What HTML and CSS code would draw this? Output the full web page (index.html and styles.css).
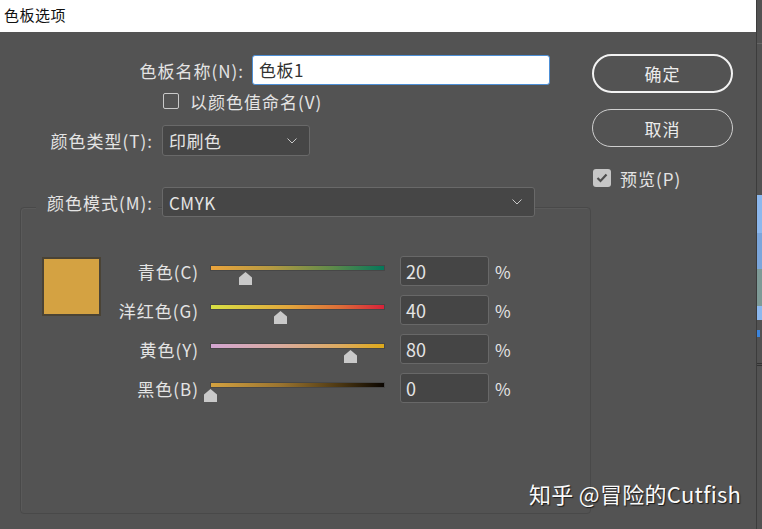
FILE: index.html
```html
<!DOCTYPE html>
<html lang="zh-CN">
<head>
  <meta charset="UTF-8">
  <title>色板选项</title>
  <link rel="stylesheet" href="styles.css">
</head>
<body>
  <div class="screen">
    <div class="window">
      <div class="titlebar">色板选项</div>
      <div class="dialog">
        <div class="form">
          <div class="row name-row">
            <label class="lbl lbl-name">色板名称(N):</label>
            <div class="text-input">色板1</div>
          </div>
          <div class="row check-row">
            <span class="box"></span>
            <span class="check-text">以颜色值命名(V)</span>
          </div>
          <div class="row type-row">
            <label class="lbl lbl-type">颜色类型(T):</label>
            <div class="select select-type">
              <span>印刷色</span>
              <svg class="chev" width="10" height="6" viewBox="0 0 10 6"><polyline points="0.5,0.5 5,5 9.5,0.5" fill="none" stroke="#c9c9c9" stroke-width="1"/></svg>
            </div>
          </div>

          <div class="group">
            <div class="group-head">
              <label class="lbl lbl-mode">颜色模式(M):</label>
              <div class="select select-mode">
                <span>CMYK</span>
                <svg class="chev" width="10" height="6" viewBox="0 0 10 6"><polyline points="0.5,0.5 5,5 9.5,0.5" fill="none" stroke="#c9c9c9" stroke-width="1"/></svg>
              </div>
            </div>
            <div class="group-body">
              <div class="swatch"></div>
              <div class="sliders">
                <div class="slider-row">
                  <label class="lbl lbl-ink">青色(C)</label>
                  <div class="slider">
                    <div class="track track-c"></div>
                    <div class="thumb" style="left: 20%"></div>
                  </div>
                  <div class="num">20</div>
                  <span class="pct">%</span>
                </div>
                <div class="slider-row">
                  <label class="lbl lbl-ink">洋红色(G)</label>
                  <div class="slider">
                    <div class="track track-m"></div>
                    <div class="thumb" style="left: 40%"></div>
                  </div>
                  <div class="num">40</div>
                  <span class="pct">%</span>
                </div>
                <div class="slider-row">
                  <label class="lbl lbl-ink">黄色(Y)</label>
                  <div class="slider">
                    <div class="track track-y"></div>
                    <div class="thumb" style="left: 80%"></div>
                  </div>
                  <div class="num">80</div>
                  <span class="pct">%</span>
                </div>
                <div class="slider-row">
                  <label class="lbl lbl-ink">黑色(B)</label>
                  <div class="slider">
                    <div class="track track-k"></div>
                    <div class="thumb" style="left: 0%"></div>
                  </div>
                  <div class="num">0</div>
                  <span class="pct">%</span>
                </div>
              </div>
            </div>
          </div>
        </div>

        <div class="side">
          <button class="btn btn-ok">确定</button>
          <button class="btn btn-cancel">取消</button>
          <div class="preview">
            <span class="box box-on">
              <svg width="12" height="10" viewBox="0 0 12 10"><polyline points="1.5,5 4.5,8 10.5,1.5" fill="none" stroke="#4e4e4e" stroke-width="2.2"/></svg>
            </span>
            <span class="check-text">预览(P)</span>
          </div>
        </div>

        <div class="watermark">知乎 @冒险的Cutfish</div>
      </div>
    </div>

    <div class="backdrop">
      <div class="bd-line"></div>
      <div class="bd-blue"></div>
      <div class="bd-blue2"></div>
      <div class="bd-teal"></div>
      <div class="bd-blue"></div>
      <div class="bd-dot"></div>
      <div class="bd-sep"></div>
    </div>
  </div>
</body>
</html>
```

FILE: styles.css
```css
* {
  box-sizing: border-box;
}
body {
  margin: 0;
  font-family: "Noto Sans CJK SC", "Noto Sans", sans-serif;
  background: #505050;
  color: #e4e4e4;
}
.screen {
  display: flex;
  width: 762px;
  height: 529px;
  overflow: hidden;
}
.window {
  width: 756px;
  flex: none;
  display: flex;
  flex-direction: column;
}
.titlebar {
  height: 32px;
  background: #fff;
  color: #111;
  font-size: 15px;
  line-height: 30px;
  padding-left: 4px;
  letter-spacing: 0.5px;
}
.dialog {
  flex: 1;
  background: #535353;
  display: flex;
  position: relative;
}
.form {
  width: 590px;
}
.row {
  display: flex;
  align-items: center;
}
.lbl {
  font-size: 17px;
  letter-spacing: 1px;
  text-align: right;
  white-space: nowrap;
}
.name-row {
  margin-top: 23px;
  height: 30px;
}
.lbl-name {
  width: 244px;
}
.text-input {
  margin-left: 8px;
  width: 298px;
  height: 30px;
  background: #fff;
  border: 1px solid #4d8fd6;
  border-radius: 3px;
  color: #333;
  font-size: 17px;
  letter-spacing: 0.5px;
  line-height: 27px;
  padding-left: 6px;
}
.check-row {
  margin-top: 6px;
  height: 20px;
  padding-left: 163px;
}
.box {
  width: 16px;
  height: 16px;
  border: 1px solid #c9c9c9;
  border-radius: 2px;
  flex: none;
}
.check-text {
  font-size: 17px;
  letter-spacing: 1px;
  line-height: 1;
  margin-left: 11px;
}
.type-row {
  margin-top: 14px;
  height: 31px;
}
.lbl-type {
  width: 153px;
}
.select {
  display: flex;
  align-items: center;
  justify-content: space-between;
  background: #464646;
  border: 1px solid #696969;
  border-radius: 3px;
  font-size: 17px;
  letter-spacing: 0.5px;
  padding: 0 12px 0 6px;
}
.select-type {
  margin-left: 9px;
  width: 148px;
  height: 31px;
}
.chev {
  display: block;
}

.group {
  margin: 51px 0 0 20px;
  width: 571px;
  height: 307px;
  border: 1px solid #494949;
  border-radius: 4px;
  box-shadow: inset 1px 1px 0 #5a5a5a;
}
.group-head {
  display: flex;
  align-items: center;
  margin-top: -21px;
  height: 30px;
  padding-left: 15px;
}
.lbl-mode {
  width: 122px;
  padding-right: 5px;
  background: #535353;
}
.select-mode {
  margin-left: 4px;
  width: 373px;
  height: 30px;
}
.group-body {
  display: flex;
  margin-top: 39px;
}
.swatch {
  margin: 1px 0 0 21px;
  width: 59px;
  height: 59px;
  background: #d4a242;
  border: 2px solid #4a4335;
  flex: none;
}
.sliders {
  display: flex;
  flex-direction: column;
  gap: 9px;
}
.slider-row {
  display: flex;
  align-items: center;
  height: 30px;
}
.lbl-ink {
  width: 98px;
}
.slider {
  position: relative;
  margin-left: 11px;
  width: 175px;
  height: 30px;
}
.track {
  margin-top: 9px;
  height: 6px;
  border: 1px solid #474747;
}
.track-c {
  background: linear-gradient(to right, #eba43c, #b59a42 35%, #5f8a4a 70%, #04775a);
}
.track-m {
  background: linear-gradient(to right, #d8e044, #e2a63c 45%, #dc6c38 75%, #d7223a);
}
.track-y {
  background: linear-gradient(to right, #d3a6d2, #d9ab9e 40%, #dcaa5e 75%, #dea91a);
}
.track-k {
  background: linear-gradient(to right, #d4a240, #9a7430 40%, #4a3612 75%, #0a0500);
}
.thumb {
  position: absolute;
  top: 16px;
  width: 13px;
  height: 13px;
  margin-left: -6px;
  background: #c9c9c9;
  clip-path: polygon(50% 0, 100% 42%, 100% 100%, 0 100%, 0 42%);
}
.num {
  margin-left: 15px;
  width: 89px;
  height: 30px;
  background: #454545;
  border: 1px solid #686868;
  border-radius: 3px;
  font-size: 18px;
  line-height: 28px;
  padding-left: 5px;
}
.pct {
  margin-left: 6px;
  font-size: 17px;
}

.side {
  margin-left: 2px;
  padding-top: 22px;
  width: 141px;
  display: flex;
  flex-direction: column;
}
.btn {
  font-family: inherit;
  font-size: 17px;
  letter-spacing: 1px;
  color: #ececec;
  background: transparent;
  border-radius: 20px;
  width: 141px;
  padding: 0;
}
.btn-ok {
  height: 39px;
  border: 2px solid #f2f2f2;
}
.btn-cancel {
  margin-top: 16px;
  height: 38px;
  border: 1px solid #cfcfcf;
}
.preview {
  margin-top: 22px;
  height: 18px;
  display: flex;
  align-items: center;
  padding-left: 1px;
}
.box-on {
  width: 18px;
  height: 18px;
  border: none;
  background: #c6c6c6;
  border-radius: 3px;
  display: flex;
  align-items: center;
  justify-content: center;
}
.preview .check-text {
  margin-left: 9px;
}
.watermark {
  position: absolute;
  left: 529px;
  top: 445px;
  font-size: 22px;
  letter-spacing: 0.3px;
  color: #fafafa;
  text-shadow: 1px 1px 1px rgba(0, 0, 0, 0.7);
  white-space: nowrap;
}

.backdrop {
  flex: 1;
  border-left: 1px solid #3c3c3c;
  background: #525252;
  padding-top: 43px;
}
.bd-line {
  height: 1px;
  background: #666;
}
.bd-blue {
  margin-top: 151px;
  height: 38px;
  background: #8cb8ee;
}
.bd-blue2 {
  height: 36px;
  background: #7ba6dc;
}
.bd-teal {
  height: 37px;
  background: #7e9a96;
}
.bd-blue + .bd-dot {
  margin-top: 10px;
}
.bd-teal + .bd-blue {
  margin-top: 0;
  height: 14px;
}
.bd-dot {
  width: 3px;
  height: 7px;
  background: #3b84dc;
}
.bd-sep {
  margin-top: 26px;
  height: 3px;
  border-top: 1px solid #333;
  border-bottom: 1px solid #333;
}
```
